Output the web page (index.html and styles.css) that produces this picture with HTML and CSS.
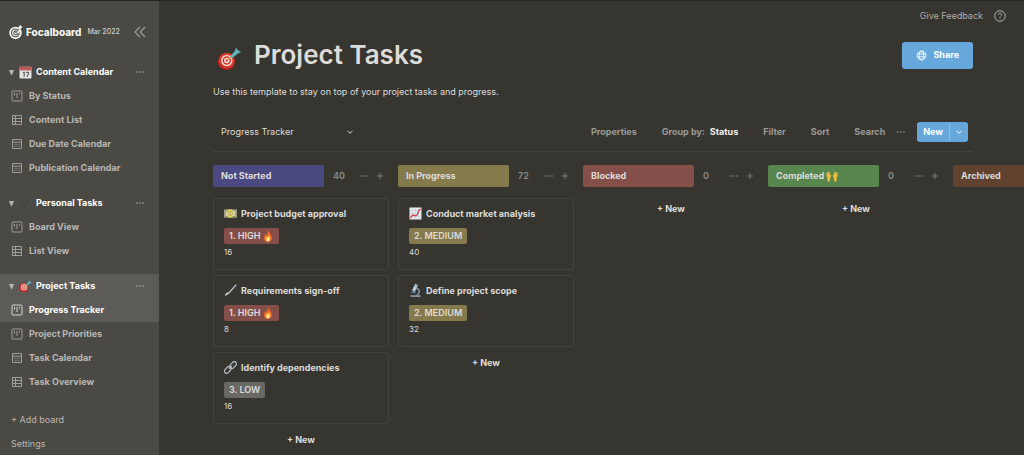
FILE: index.html
```html
<!DOCTYPE html>
<html lang="en">
<head>
<meta charset="utf-8">
<meta name="viewport" content="width=device-width, initial-scale=1">
<title>Project Tasks</title>
<link rel="stylesheet" href="styles.css">
</head>
<body>
<svg class="sprite" aria-hidden="true">
  <symbol id="board" viewBox="0 0 12 12"><rect x="1" y="1" width="10" height="10" rx="1" fill="none" stroke="currentColor"/><path d="M3.500 3v2.500M6 3v5M8.500 3v1.500" fill="none" stroke="currentColor"/></symbol>
  <symbol id="list" viewBox="0 0 12 12"><path d="M1.500 1.500h9v9h-9zM1.500 4.500h9M1.500 7.500h9M4.500 1.500v9" fill="none" stroke="currentColor"/></symbol>
  <symbol id="cal" viewBox="0 0 12 12"><path d="M1.500 1.500h9v9h-9zM1.500 4.200h9" fill="none" stroke="currentColor"/><path d="M3.500 6.300h5M3.500 8.300h5" fill="none" stroke="currentColor" stroke-dasharray="1 1"/></symbol>
  <symbol id="dots" viewBox="0 0 8 8"><g fill="currentColor"><circle cx="1" cy="4" r=".8"/><circle cx="4" cy="4" r=".8"/><circle cx="7" cy="4" r=".8"/></g></symbol>
  <symbol id="plus" viewBox="0 0 8 8"><path d="M4 1v6M1 4h6" stroke="currentColor" stroke-width=".8"/></symbol>
  <symbol id="chev" viewBox="0 0 8 8"><path d="M1.500 2.800 4 5.300l2.500-2.500" fill="none" stroke="currentColor" stroke-width="1"/></symbol>
  <symbol id="dart" viewBox="0 0 24 24">
    <circle cx="9" cy="14.500" r="8.500" fill="#b9221f"/><circle cx="9.300" cy="13.500" r="7.700" fill="#dc3a32"/><circle cx="9.300" cy="13.500" r="5.600" fill="#f3e9e4"/><circle cx="9.300" cy="13.500" r="4.300" fill="#d8362e"/><circle cx="9.300" cy="13.500" r="2.700" fill="#f3e9e4"/><circle cx="9.300" cy="13.500" r="1.300" fill="#d8362e"/>
    <path d="M9.500 13.500 15 8" stroke="#d9a648" stroke-width="1.500"/><path d="m12.500 9.500 5-5.500.8-3.500 2 2.700 3.400 1.500-3.300 1.700-5.500 4.400z" fill="#5fb4bf"/>
  </symbol>
  <symbol id="calemoji" viewBox="0 0 13 13"><rect x=".5" y=".8" width="12" height="11.700" rx="1" fill="#e4e2e0"/><path d="M.5 1.800q0-1 1-1h10q1 0 1 1v2.700H.5z" fill="#c4605d"/><path d="M2 2h1m1.500 0h1M7 2h1m1.500 0h1" stroke="#703532"/><path d="m4 6.700 1.200-.7v4.800M6.800 6.300h3l-1.600 4.500" fill="none" stroke="#4b4946" stroke-width="1"/></symbol>
  <symbol id="money" viewBox="0 0 13 13"><path d="M.3 2.500h12.400v8H.3z" fill="#d5d2ad"/><path d="M1.300 3.500h10.400v6H1.300z" fill="none" stroke="#79805b" stroke-width=".7"/><path d="M4 2.500h4.500v8H4z" fill="#e7cf58"/><circle cx="6.300" cy="6.500" r="2" fill="#f3ecc6" stroke="#9e8f35" stroke-width=".7"/><path d="M6.300 5.300v2.400" stroke="#756b30" stroke-width=".7"/></symbol>
  <symbol id="brush" viewBox="0 0 13 13"><path d="M12.300.8 4 10" stroke="#c3c9d1" stroke-width="1.500"/><path d="M12.700 1.300 5 9.800" stroke="#4b5a74" stroke-width=".8"/><path d="M4.500 9.300 3.300 10.800.7 12.300l1.200-2.700 1.300-1.300z" fill="#cfd2d4"/></symbol>
  <symbol id="link" viewBox="0 0 13 13"><g fill="none" stroke="#aeb8c1" stroke-width="1.300"><rect x="5.500" y="1.800" width="7.500" height="4.400" rx="2.200" transform="rotate(-48 9.200 4)"/><rect x="0" y="6.700" width="7.500" height="4.400" rx="2.200" transform="rotate(-48 3.800 9)"/></g><path d="m5 7.800 3-3.100" stroke="#d9dfe4"/></symbol>
  <symbol id="chart" viewBox="0 0 13 13"><path d="M.5.500h12v12H.5z" fill="#e8eaee"/><path d="M3.500.5v12M6.500.5v12M9.500.5v12M.5 3.500h12M.5 6.500h12M.5 9.500h12" stroke="#b7c4d6" stroke-width=".5"/><path d="m1.300 10.800 2.500-3 2 1 2.400-.8 1.500-4.500 2-1.500" fill="none" stroke="#d43d43" stroke-width="1.200"/></symbol>
  <symbol id="scope" viewBox="0 0 13 13"><path d="M1.500 11.300h10v1.500h-10z" fill="#9baab6"/><path d="M7.500 4.500q4 1 2.300 4.700L8 11.500" fill="none" stroke="#7c98ac" stroke-width="1.500"/><path d="m5.500 1 3 1.400-2.800 5.500-2.700-1.300z" fill="#b7cbd8"/><path d="m6 .3 2.800 1.300" stroke="#e7eef2"/><path d="M2 8.500h5" stroke="#4d81a8" stroke-width="1.300"/></symbol>
  <symbol id="fire" viewBox="0 0 11 12"><path d="M5.300 0c.7 2 4 4 4 7.700A4 4 0 0 1 5.500 12 4 4 0 0 1 1.500 8C1.500 6.200 2.500 5 3 3.700l1 1.500C5.300 3.800 5.500 2 5.300 0z" fill="#f36a25"/><path d="M6 4.500c.4 1.800 2 2.300 2 4.300a2.400 2.400 0 0 1-4.900 0c0-1.200.6-1.900 1-2.500l.7 1C5.700 6.500 6 5.500 6 4.500z" fill="#ffc14a"/><path d="M5.800 7.500c.9 1.500 1.200 4-.4 4S4 9.500 5.800 7.500z" fill="#fff0ae"/></symbol>
  <symbol id="hands" viewBox="0 0 13 13"><g fill="#edb93f"><path d="M.5 4 1.300 2.500l1 .5.800-1 1 .8.300 2.200 1.400 1-1 2.700-.6.800.2 3H1.500V9L.7 7.500z"/><path d="m12.500 4-.8-1.500-1 .5-.8-1-1 .8-.3 2.200-1.400 1 1 2.700.6.800-.2 3h2.900V9l.8-1.500z"/></g></symbol>
</svg>
<div class="app">
  <aside class="sidebar">
    <div class="brand">
      <svg class="logo" viewBox="0 0 15 17" aria-hidden="true"><circle cx="7" cy="9.500" r="6.700" fill="#f4f4f3"/><path d="M9 5.900A4.200 4.200 0 1 0 11 9M7.500 7.600a2 2 0 1 0 1.600 1.700M7 9.600l4-5" fill="none" stroke="#4b4944" stroke-width="1.100"/><path d="m10 5.700.2-2.600L12.600.7l.4 1.800 1.700.5-2.300 2.400z" fill="#f4f4f3"/></svg>
      <span class="brand-name">Focalboard</span><span class="version">Mar 2022</span>
      <button class="collapse" aria-label="Hide sidebar"><svg viewBox="0 0 12 12"><path d="M5.700 1 1 6l4.700 5M11 1 6.300 6l4.700 5" fill="none" stroke="currentColor" stroke-width="1.200"/></svg></button>
    </div>
    <nav class="groups">
      <section>
        <div class="group"><span class="caret"></span><svg class="emoji"><use href="#calemoji"/></svg><a href="#content">Content Calendar</a><button aria-label="Board options"><svg class="i8"><use href="#dots"/></svg></button></div>
        <a class="view" href="#v1"><svg><use href="#board"/></svg>By Status</a>
        <a class="view" href="#v2"><svg><use href="#list"/></svg>Content List</a>
        <a class="view" href="#v3"><svg><use href="#cal"/></svg>Due Date Calendar</a>
        <a class="view" href="#v4"><svg><use href="#cal"/></svg>Publication Calendar</a>
      </section>
      <section>
        <div class="group"><span class="caret"></span><svg class="emoji check" viewBox="0 0 13 13"><path d="m2 7 3 3 6-8" fill="none" stroke="currentColor" stroke-width="1.500"/></svg><a href="#personal">Personal Tasks</a><button aria-label="Board options"><svg class="i8"><use href="#dots"/></svg></button></div>
        <a class="view" href="#v5"><svg><use href="#board"/></svg>Board View</a>
        <a class="view" href="#v6"><svg><use href="#list"/></svg>List View</a>
      </section>
      <section>
        <div class="group active"><span class="caret"></span><svg class="emoji"><use href="#dart"/></svg><a href="#project">Project Tasks</a><button aria-label="Board options"><svg class="i8"><use href="#dots"/></svg></button></div>
        <a class="view active" href="#v7"><svg><use href="#board"/></svg>Progress Tracker</a>
        <a class="view" href="#v8"><svg><use href="#board"/></svg>Project Priorities</a>
        <a class="view" href="#v9"><svg><use href="#cal"/></svg>Task Calendar</a>
        <a class="view" href="#v10"><svg><use href="#list"/></svg>Task Overview</a>
      </section>
    </nav>
    <div class="side-foot"><button>+ Add board</button><button>Settings</button></div>
  </aside>
  <main class="main">
    <div class="topbar"><a href="#feedback">Give Feedback</a><button aria-label="Help"><svg class="help" viewBox="0 0 12 12"><g fill="none" stroke="currentColor"><circle cx="6" cy="6" r="5.300"/><path d="M4.300 4.700C4.400 2.600 7.700 2.700 7.600 4.600 7.500 5.700 6 5.700 6 7.200M6 8.200v1"/></g></svg></button></div>
    <header class="title-row">
      <svg class="title-icon"><use href="#dart"/></svg><h1>Project Tasks</h1>
      <button class="share"><svg viewBox="0 0 12 12"><g fill="none" stroke="currentColor"><circle cx="6" cy="6" r="4.800"/><ellipse cx="6" cy="6" rx="2.200" ry="4.800"/><path d="M1.500 4.400h9M1.500 7.600h9"/></g></svg>Share</button>
    </header>
    <p class="desc">Use this template to stay on top of your project tasks and progress.</p>
    <div class="toolbar">
      <div class="picker"><input type="text" value="Progress Tracker" aria-label="View name"><button aria-label="Choose view"><svg class="i8"><use href="#chev"/></svg></button></div>
      <div class="tools"><button>Properties</button><button>Group by: <b>Status</b></button><button>Filter</button><button>Sort</button><button>Search</button></div>
      <button class="more" aria-label="View options"><svg class="i8"><use href="#dots"/></svg></button>
      <div class="new-split"><button>New</button><button class="drop" aria-label="New card templates"><svg class="i8"><use href="#chev"/></svg></button></div>
    </div>
    <div class="board">
      <section class="column">
        <div class="col-head"><h2 class="pill blue">Not Started</h2><span class="count">40</span><button aria-label="Column options"><svg class="i8"><use href="#dots"/></svg></button><button aria-label="Add card"><svg class="i8"><use href="#plus"/></svg></button></div>
        <article class="card"><h3><svg class="emoji"><use href="#money"/></svg>Project budget approval</h3><span class="tag red">1. HIGH <svg class="fire"><use href="#fire"/></svg></span><p>16</p></article>
        <article class="card"><h3><svg class="emoji"><use href="#brush"/></svg>Requirements sign-off</h3><span class="tag red">1. HIGH <svg class="fire"><use href="#fire"/></svg></span><p>8</p></article>
        <article class="card"><h3><svg class="emoji"><use href="#link"/></svg>Identify dependencies</h3><span class="tag grey">3. LOW</span><p>16</p></article>
        <button class="add">+ New</button>
      </section>
      <section class="column">
        <div class="col-head"><h2 class="pill yellow">In Progress</h2><span class="count">72</span><button aria-label="Column options"><svg class="i8"><use href="#dots"/></svg></button><button aria-label="Add card"><svg class="i8"><use href="#plus"/></svg></button></div>
        <article class="card"><h3><svg class="emoji"><use href="#chart"/></svg>Conduct market analysis</h3><span class="tag yellow">2. MEDIUM</span><p>40</p></article>
        <article class="card"><h3><svg class="emoji"><use href="#scope"/></svg>Define project scope</h3><span class="tag yellow">2. MEDIUM</span><p>32</p></article>
        <button class="add">+ New</button>
      </section>
      <section class="column">
        <div class="col-head"><h2 class="pill red">Blocked</h2><span class="count">0</span><button aria-label="Column options"><svg class="i8"><use href="#dots"/></svg></button><button aria-label="Add card"><svg class="i8"><use href="#plus"/></svg></button></div>
        <button class="add">+ New</button>
      </section>
      <section class="column">
        <div class="col-head"><h2 class="pill green">Completed <svg class="fire"><use href="#hands"/></svg></h2><span class="count">0</span><button aria-label="Column options"><svg class="i8"><use href="#dots"/></svg></button><button aria-label="Add card"><svg class="i8"><use href="#plus"/></svg></button></div>
        <button class="add">+ New</button>
      </section>
      <section class="column">
        <div class="col-head"><h2 class="pill brown">Archived</h2></div>
      </section>
    </div>
  </main>
</div>
</body>
</html>
```
FILE: styles.css
```css
* { box-sizing: border-box; }
body { margin: 0; background: #37352f; color: #dddcda; font: 9px/12px Inter, "Liberation Sans", sans-serif; }
h1, h2, h3, p { margin: 0; font-size: inherit; }
a { color: inherit; text-decoration: none; }
button { display: flex; align-items: center; padding: 0; border: 0; background: none; color: inherit; font: inherit; cursor: pointer; }
svg { flex: none; display: block; }
.sprite { position: absolute; width: 0; height: 0; }
.i8 { width: 8px; height: 8px; }
.emoji { width: 13px; height: 13px; }
.fire { width: 12px; height: 12px; }

.app { display: flex; min-height: 100vh; border-top: 1px solid #252420; overflow: hidden; }

.sidebar { flex: none; width: 159px; background: #4b4944; color: #b9b8b5; font-weight: 700; }
.brand { display: flex; align-items: center; height: 59px; padding: 3px 13px 0 9px; }
.logo { width: 14px; height: 16px; margin-right: 3px; }
.brand-name { color: #f4f4f3; font-size: 10px; font-weight: 800; }
.version { margin-left: 6px; color: #d0cfcd; font-size: 7px; font-weight: 500; }
.collapse { margin-left: auto; color: #9d9c99; }
.collapse svg { width: 12px; height: 12px; }
.groups { display: flex; flex-direction: column; gap: 11px; }
.group { display: flex; align-items: center; height: 24px; padding: 0 15px 0 9px; color: #fff; }
.caret { width: 5px; border: solid transparent; border-width: 5px 2px 0; border-top-color: #b4b3b0; margin-right: 5px; }
.group .emoji { margin-right: 4px; }
.check { color: #45433f; }
.group button { margin-left: auto; color: #aaa9a6; }
.view { display: flex; align-items: center; gap: 6px; height: 24px; padding-left: 11px; }
.view svg { width: 12px; height: 12px; color: #9f9e9b; }
.active { background: #5d5b57; }
.view.active { color: #fff; }
.view.active svg { color: #d6d5d3; }
.side-foot { padding-top: 14px; padding-left: 11px; font-weight: 400; }
.side-foot button { height: 24px; }

.main { flex: 1; min-width: 0; padding-left: 54px; }
.topbar { display: flex; justify-content: flex-end; align-items: center; gap: 11px; height: 30px; padding-right: 18px; color: #aeadab; }
.help { width: 12px; height: 12px; }
.title-row { display: flex; align-items: center; height: 48px; margin-right: 51px; padding-left: 4px; }
.title-icon { width: 25px; height: 24px; margin-top: 8px; }
h1 { margin-left: 12px; font: 600 26px/32px Inter, sans-serif; }
.share { gap: 6px; height: 27px; margin-left: auto; padding: 0 14px; border-radius: 3px; background: #67a8dc; color: #fff; font-weight: 700; }
.share svg { width: 11px; height: 11px; }
.desc { margin-top: 7px; }
.toolbar { display: flex; align-items: center; height: 40px; margin: 14px 51px 0 0; padding: 0 5px 0 8px; border-bottom: 1px solid #45433e; }
.picker { display: flex; align-items: center; justify-content: space-between; width: 133px; }
.picker input { width: 100px; padding: 0; border: 0; background: none; color: #dddcda; font: inherit; }
.tools { display: flex; gap: 25px; margin-left: auto; color: #9b9a97; }
.tools button { font-weight: 700; gap: 5px; }
.tools b { color: #f0f0ef; font-weight: 700; }
.more { margin: 0 12px; color: #9b9a97; }
.new-split { display: flex; height: 20px; overflow: hidden; border-radius: 3px; background: #67a8dc; color: #fff; font-weight: 700; }
.new-split button { padding: 0 6px; }
.new-split .drop { padding: 0 5px; border-left: 1px solid #8abce4; }

.board { display: flex; gap: 9px; padding-top: 13px; overflow: hidden; }
.column { flex: none; width: 176px; }
.col-head { display: flex; align-items: center; height: 22px; margin-bottom: 11px; color: #8b8a87; }
.pill { display: flex; align-items: center; gap: 2px; width: 111px; height: 22px; padding: 0 8px; border-radius: 2px; color: #dddcda; font-weight: 700; }
.count { flex: 1; padding-left: 9px; font-weight: 600; }
.col-head button + button { margin-left: 8px; margin-right: 5px; }
.blue { background: #4b4981; }
.yellow { background: #857a4c; }
.red { background: #854f49; }
.green { background: #57864e; }
.brown { background: #60422f; }
.grey { background: #696865; }
.card { height: 72px; margin-bottom: 5px; padding: 8px 10px; border: 1px solid #45433e; border-radius: 3px; }
.card h3 { display: flex; align-items: center; gap: 4px; height: 13px; font-weight: 700; }
.tag { display: inline-flex; align-items: center; gap: 2px; height: 16px; margin-top: 8px; padding: 0 5px; border-radius: 2px; font-weight: 600; vertical-align: top; }
.card p { margin-top: 2px; font-size: 8px; }
.add { margin: 0 auto; height: 22px; font-weight: 700; }
```
